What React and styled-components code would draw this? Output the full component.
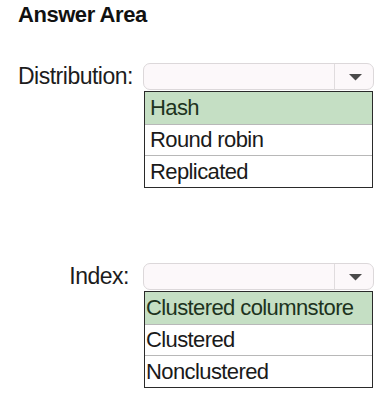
import React from "react"
import styled, { createGlobalStyle } from "styled-components"

const GlobalStyle = createGlobalStyle`
  html, body {
    margin: 0;
    padding: 0;
    background: #ffffff;
  }
  body {
    font-family: "Liberation Sans", Arial, sans-serif;
    color: #1a1a1a;
  }
`

const Page = styled.div`
  width: 389px;
  height: 404px;
  box-sizing: border-box;
  padding: 2px 0 0 18px;
  display: flex;
  flex-direction: column;
`

const Title = styled.h2`
  margin: 0;
  font-size: 22px;
  font-weight: 700;
  line-height: 26px;
  letter-spacing: -0.45px;
  color: #111;
`

const Field = styled.div`
  display: grid;
  grid-template-columns: 111px 231px;
  column-gap: 14px;
  margin-top: ${({ top }) => top}px;
`

const Label = styled.div`
  grid-column: 1;
  grid-row: 1;
  align-self: center;
  text-align: right;
  font-size: 23px;
  line-height: 27px;
  letter-spacing: -0.5px;
  color: #1c1c1c;
`

const Select = styled.div`
  grid-column: 2;
  grid-row: 1;
  height: 27px;
  box-sizing: border-box;
  border: 1px solid #dcd8da;
  border-radius: 7px;
  background: #fcf8fa;
  display: flex;
  justify-content: flex-end;
`

const ArrowButton = styled.div`
  width: 36px;
  border-left: 1px solid #e0dcde;
  display: flex;
  align-items: center;
  justify-content: center;
  padding-left: 2px;
`

const Options = styled.div`
  grid-column: 2;
  grid-row: 2;
  margin: 1px 1px 0 1px;
  border: 1.5px solid #2a2a2a;
  display: flex;
  flex-direction: column;
  background: #fff;
`

const Option = styled.div`
  height: ${({ h }) => h}px;
  box-sizing: border-box;
  display: flex;
  align-items: center;
  padding-left: ${({ pad }) => pad}px;
  font-size: 22px;
  letter-spacing: -0.6px;
  background: ${({ selected }) => (selected ? "#c5dfc4" : "#ffffff")};
  color: ${({ selected }) => (selected ? "#1d3320" : "#1a1a1a")};
  & + & {
    border-top: 1px solid #b8b8b8;
  }
`

const Arrow = () => (
  <svg width="15" height="8" viewBox="0 0 15 8">
    <path d="M1 1 L14 1 L7.5 7.5 Z" fill="#4a4a4a" />
  </svg>
)

const Dropdown = ({ label, options, top, pad }) => (
  <Field top={top}>
    <Label>{label}</Label>
    <Select>
      <ArrowButton>
        <Arrow />
      </ArrowButton>
    </Select>
    <Options>
      {options.map((opt, i) => (
        <Option key={opt} selected={i === 0} pad={pad} h={i === 1 ? 31 : 32}>
          {opt}
        </Option>
      ))}
    </Options>
  </Field>
)

export default function App() {
  return (
    <>
      <GlobalStyle />
      <Page>
        <Title>Answer Area</Title>
        <Dropdown
          label="Distribution:"
          options={["Hash", "Round robin", "Replicated"]}
          top={35}
          pad={5}
        />
        <Dropdown
          label="Index:"
          options={["Clustered columnstore", "Clustered", "Nonclustered"]}
          top={75}
          pad={1}
        />
      </Page>
    </>
  )
}
